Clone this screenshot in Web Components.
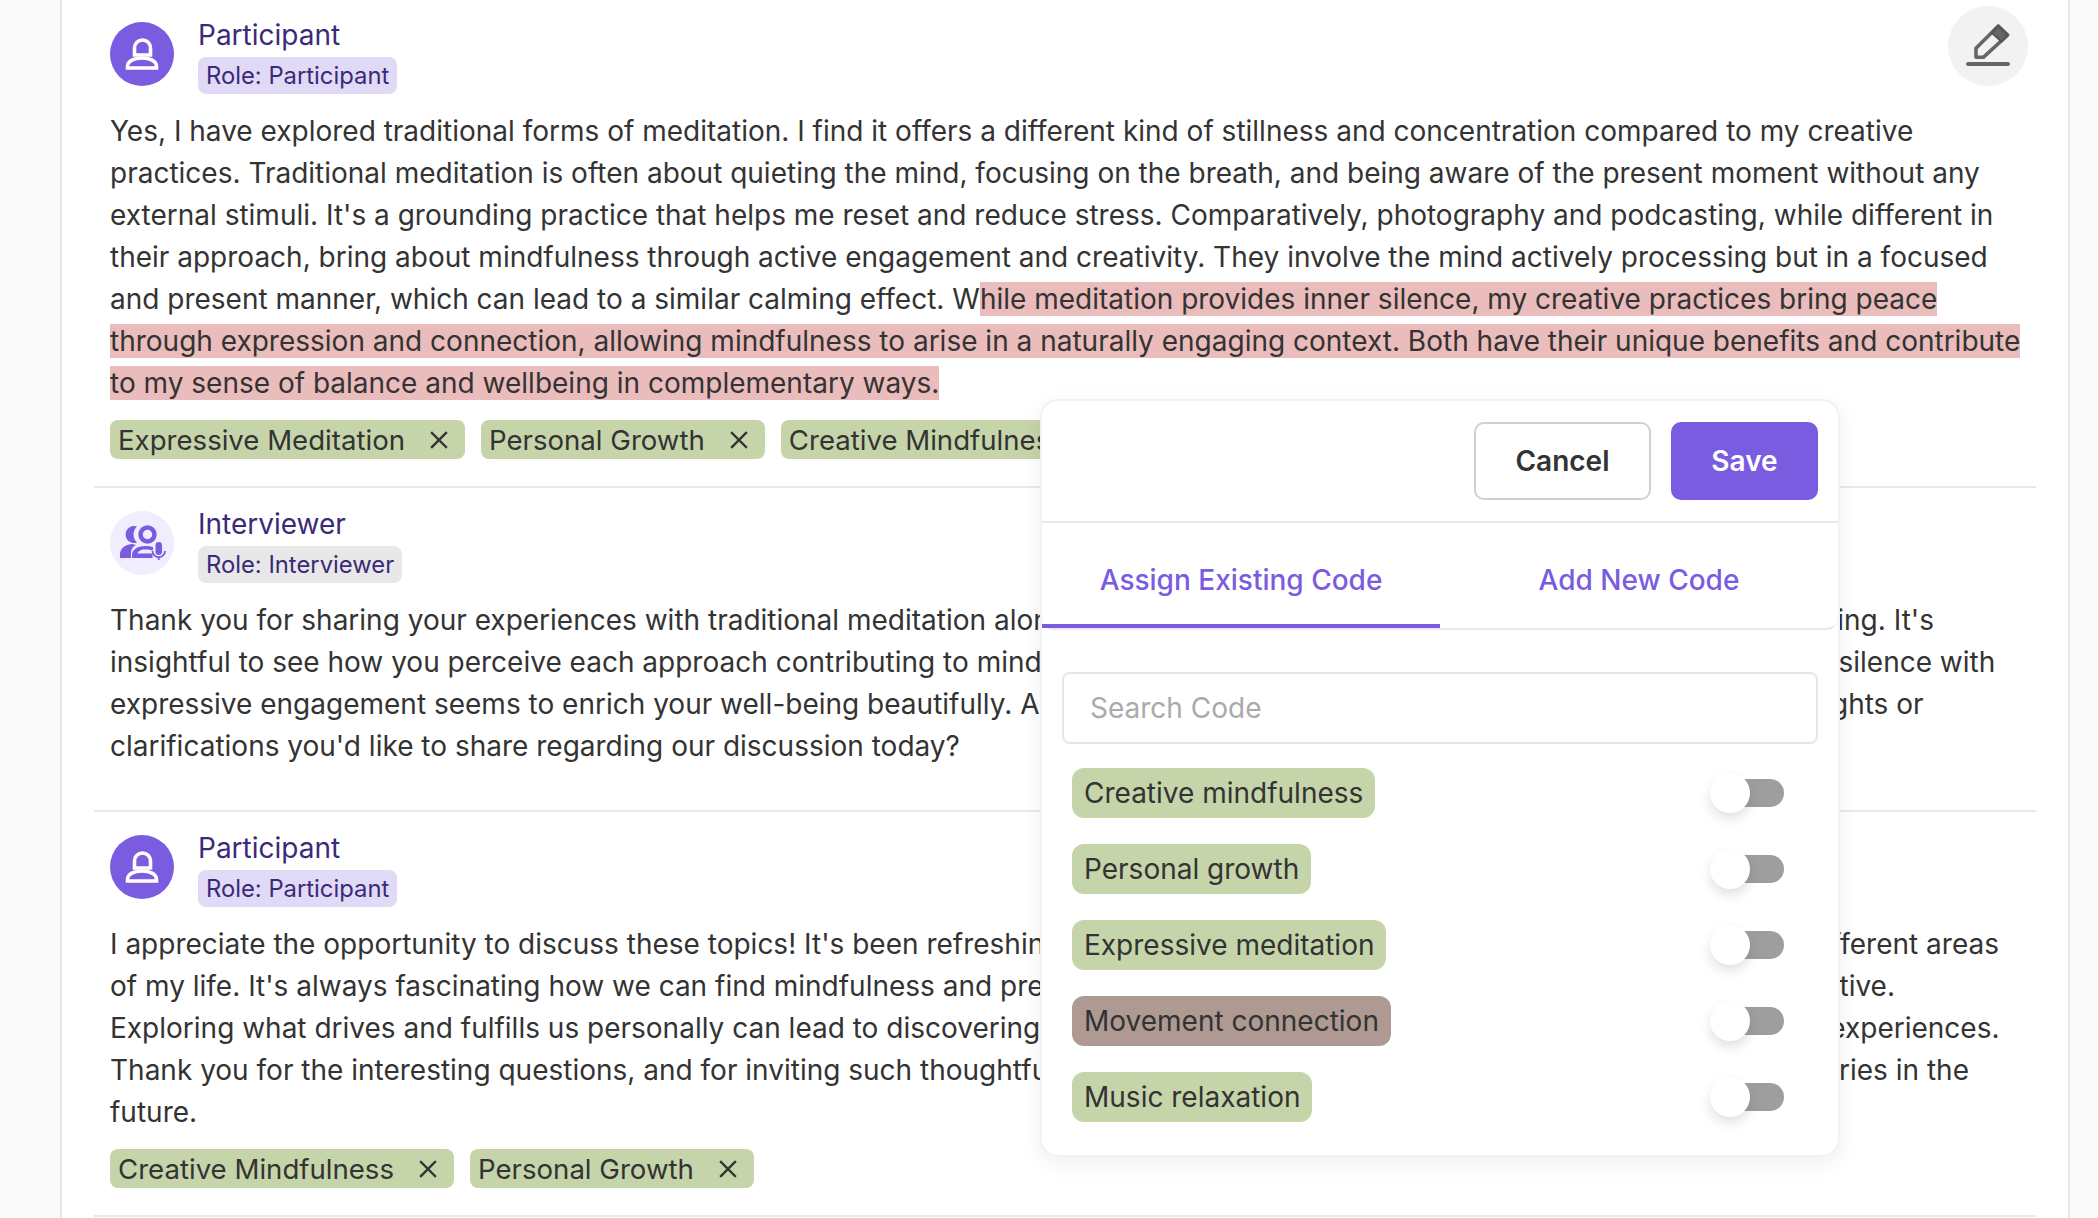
<!DOCTYPE html>
<html>
<head>
<meta charset="utf-8">
<style>
html,body{margin:0;height:100%;overflow:hidden;background:#fafafa;}
body{font-family:Inter,"Liberation Sans",sans-serif;color:#333;}
</style>
</head>
<body>
<transcript-page>
    <transcript-segment name="Participant" role="participant" editable style="--seg-top:17px">
        Yes, I have explored traditional forms of meditation. I find it offers a different kind of stillness and concentration compared to my creative practices. Traditional meditation is often about quieting the mind, focusing on the breath, and being aware of the present moment without any external stimuli. It's a grounding practice that helps me reset and reduce stress. Comparatively, photography and podcasting, while different in their approach, bring about mindfulness through active engagement and creativity. They involve the mind actively processing but in a focused and present manner, which can lead to a similar calming effect. W<text-highlight>hile meditation provides inner silence, my creative practices bring peace through expression and connection, allowing mindfulness to arise in a naturally engaging context. Both have their unique benefits and contribute to my sense of balance and wellbeing in complementary ways.</text-highlight>
        <code-tag slot="tags">Expressive Meditation</code-tag>
        <code-tag slot="tags">Personal Growth</code-tag>
        <code-tag slot="tags">Creative Mindfulness</code-tag>
    </transcript-segment>
    <transcript-segment name="Interviewer" role="interviewer">
        Thank you for sharing your experiences with traditional meditation alongside your creative practices and how these are all connecting. It's<br>
        insightful to see how you perceive each approach contributing to mindfulness in such contrasting ways. Combining that traditional silence with<br>
        expressive engagement seems to enrich your well-being beautifully. As we come to the end of our chat, are there any further thoughts or<br>
        clarifications you'd like to share regarding our discussion today?
    </transcript-segment>
    <transcript-segment name="Participant" role="participant">
        I appreciate the opportunity to discuss these topics! It's been refreshing to reflect on how all my practices connect across many different areas<br>
        of my life. It's always fascinating how we can find mindfulness and presence in the smallest things we do, whether focused or creative.<br>
        Exploring what drives and fulfills us personally can lead to discovering true meaning and deeper connection in all of our everyday experiences.<br>
        Thank you for the interesting questions, and for inviting such thoughtful reflection. I wish you all the best with your work and the series in the<br>
        future.
        <code-tag slot="tags">Creative Mindfulness</code-tag>
        <code-tag slot="tags">Personal Growth</code-tag>
    </transcript-segment>
    <code-popover slot="overlay">
        <code-row>Creative mindfulness</code-row>
        <code-row>Personal growth</code-row>
        <code-row>Expressive meditation</code-row>
        <code-row color="#ae9a92">Movement connection</code-row>
        <code-row>Music relaxation</code-row>
    </code-popover>
</transcript-page>

<script>
class TranscriptPage extends HTMLElement{
    constructor(){
        super();
        this.attachShadow({mode:'open'});
        this.shadowRoot.innerHTML = `
        <style>
            :host{display:block;position:relative;height:1218px;overflow:hidden;box-sizing:border-box;
                margin-left:60px;width:2010px;background:#fff;
                border-left:2px solid #e8e8e8;border-right:2px solid #e8e8e8;padding:0 32px;}
        </style>
        <slot></slot>
        <slot name="overlay"></slot>`;
    }
}

const participantIcon = `
<svg viewBox="0 0 64 64" width="64" height="64">
    <circle cx="32" cy="32" r="32" fill="#7a5ce0"/>
    <path d="M24.5 33V26a8 8 0 0 1 16 0v7z" fill="none" stroke="#fff" stroke-width="3.6"/>
    <path d="M17.5 46v-1.500c0-5.500 7-8.500 14.500-8.500s14.500 3 14.500 8.500V46z" fill="none" stroke="#fff" stroke-width="3.6"/>
</svg>`;

const interviewerIcon = `
<svg viewBox="0 0 64 64" width="64" height="64">
    <circle cx="32" cy="32" r="32" fill="#f0edff"/>
    <circle cx="37.500" cy="23.500" r="7" fill="none" stroke="#7a5ce0" stroke-width="4.500"/>
    <path d="M27 15.500a8.500 8.500 0 1 0 0 16a11 11 0 0 1 0-16z" fill="#7a5ce0"/>
    <path d="M10 47v-4c0-5 4-9 12-10l4 1c-4 2-5 5-5 9v4z" fill="#7a5ce0"/>
    <path d="M22 47v-3c0-5 5-9 13-9c3 0 6 .5 8 1v3.500c-2-.5-5-1-8-1c-4.500 0-7 2-7.500 4h15v4.500z" fill="#7a5ce0"/>
    <rect x="45.500" y="31" width="6.500" height="13" rx="3.250" fill="#7a5ce0"/>
    <path d="M42.500 40a6.250 6.250 0 0 0 12.500 0M48.750 46.500V49" fill="none" stroke="#7a5ce0" stroke-width="1.800"/>
</svg>`;

class TranscriptSegment extends HTMLElement{
    constructor(){
        super();
        this.attachShadow({mode:'open'});
    }
    connectedCallback(){
        const isInterviewer = this.getAttribute('role') === 'interviewer';
        const name = this.getAttribute('name');
        const editBtn = this.hasAttribute('editable') ? `
            <div class="edit">
                <svg viewBox="0 0 80 80" width="80" height="80">
                    <path d="M50.300 20L59.700 29L35.300 51.300H28V42.300z" fill="none" stroke="#666" stroke-width="3.600" stroke-linejoin="round"/>
                    <path d="M50.300 20L59.700 29L53.700 35.700L43.700 26.700z" fill="#666" stroke="#555" stroke-width="2" stroke-linejoin="round"/>
                    <path d="M20 58H60" stroke="#666" stroke-width="4" stroke-linecap="round"/>
                </svg>
            </div>` : '';
        this.shadowRoot.innerHTML = `
        <style>
            :host{display:block;position:relative;padding:var(--seg-top,18px) 16px 27px;border-bottom:2px solid #e8e8e8;}
            .head{display:flex;gap:24px;align-items:flex-start;}
            .avatar{margin-top:5px;width:64px;height:64px;flex:none;}
            .avatar svg{display:block;}
            .who{display:flex;flex-direction:column;align-items:flex-start;gap:4px;}
            .name{font-size:28px;line-height:36px;color:#3b2a78;}
            .role{font-size:23.8px;line-height:37px;height:37px;padding:0 8px;border-radius:8px;color:#3b2a78;
                background:${isInterviewer ? '#e8e8e8' : '#e0daf7'};}
            .text{margin:16px -6px 0 0;font-size:28px;line-height:42px;color:#333;}
            .tags{display:flex;gap:16px;margin-top:16px;}
            .edit{position:absolute;right:8px;top:6px;width:80px;height:80px;border-radius:50%;background:#f2f2f2;}
            .edit svg{display:block;}
        </style>
        <div class="head">
            <div class="avatar">${isInterviewer ? interviewerIcon : participantIcon}</div>
            <div class="who">
                <div class="name">${name}</div>
                <div class="role">Role: ${name}</div>
            </div>
        </div>
        ${editBtn}
        <div class="text"><slot></slot></div>
        <div class="tags"><slot name="tags"></slot></div>`;
        if(!this.querySelector('[slot=tags]')){
            this.shadowRoot.querySelector('.tags').style.height = '0';
        }
    }
}

class TextHighlight extends HTMLElement{
    constructor(){
        super();
        this.attachShadow({mode:'open'});
        // no whitespace around the slot, it would show up in the sentence
        this.shadowRoot.innerHTML = `<style>:host{display:inline;background:#ebbcbc;}</style><slot></slot>`;
    }
}

class CodeTag extends HTMLElement{
    constructor(){
        super();
        this.attachShadow({mode:'open'});
        this.shadowRoot.innerHTML = `
        <style>
            :host{display:inline-flex;align-items:center;height:39px;box-sizing:border-box;padding:0 17px 0 8px;
                gap:25px;border-radius:8px;background:#c6d4aa;font-size:27.6px;color:#333;white-space:nowrap;}
            svg{display:block;flex:none;}
        </style>
        <slot></slot>
        <svg viewBox="0 0 18 18" width="18" height="18"><path d="M2 2L16 16M16 2L2 16" stroke="#333" stroke-width="2.400" stroke-linecap="square"/></svg>`;
    }
}

class CodePopover extends HTMLElement{
    constructor(){
        super();
        this.attachShadow({mode:'open'});
        this.shadowRoot.innerHTML = `
        <style>
            :host{display:block;position:absolute;left:980px;top:401px;width:796px;height:754px;box-sizing:border-box;
                background:#fff;border-radius:16px;box-shadow:0 0 0 2px #f2f2f2,0 6px 24px rgba(0,0,0,.08);
                font-size:28px;color:#333;}
            .actions{display:flex;justify-content:flex-end;gap:20px;padding:21px 20px 21px;border-bottom:2px solid #e8e8e8;}
            button{font:600 28px Inter,"Liberation Sans",sans-serif;height:78px;border-radius:10px;box-sizing:border-box;}
            .cancel{width:177px;background:#fff;border:2px solid #d0d0d0;color:#333;}
            .save{width:147px;background:#7a5ce0;border:none;color:#fff;}
            .tabs{display:flex;height:107px;border-bottom:2px solid #e8e8e8;border-radius:0 0 12px 12px;box-sizing:border-box;}
            .tab{flex:1;display:flex;align-items:center;justify-content:center;color:#7a5ce0;font-weight:500;
                box-sizing:border-box;border-bottom:4px solid transparent;padding-top:12px;}
            .tab.on{border-bottom-color:#7a5ce0;}
            .body{padding:42px 20px 0;}
            input{display:block;width:100%;height:72px;box-sizing:border-box;border:2px solid #e4e6ef;border-radius:8px;
                padding:0 26px;font:28px Inter,"Liberation Sans",sans-serif;outline:none;}
            input::placeholder{color:#aaa;opacity:1;}
            .list{display:flex;flex-direction:column;gap:26px;margin-top:24px;padding:0 34px 0 10px;}
        </style>
        <div class="actions">
            <button class="cancel">Cancel</button>
            <button class="save">Save</button>
        </div>
        <div class="tabs">
            <div class="tab on">Assign Existing Code</div>
            <div class="tab">Add New Code</div>
        </div>
        <div class="body">
            <input placeholder="Search Code">
            <div class="list"><slot></slot></div>
        </div>`;
    }
}

class CodeRow extends HTMLElement{
    constructor(){
        super();
        this.attachShadow({mode:'open'});
    }
    connectedCallback(){
        const color = this.getAttribute('color') || '#c6d4aa';
        this.shadowRoot.innerHTML = `
        <style>
            :host{display:flex;align-items:center;justify-content:space-between;height:50px;}
            .chip{display:flex;align-items:center;height:50px;padding:0 12px;border-radius:12px;background:${color};font-size:28px;color:#333;white-space:nowrap;}
            .toggle{position:relative;width:54px;height:28px;border-radius:0 14px 14px 0;background:#9e9e9e;}
            .knob{position:absolute;left:-20px;top:-6px;width:40px;height:40px;border-radius:50%;background:#fff;
                box-shadow:0 6px 12px rgba(0,0,0,.12);}
        </style>
        <div class="chip"><slot></slot></div>
        <div class="toggle"><div class="knob"></div></div>`;
    }
}

customElements.define('transcript-page', TranscriptPage);
customElements.define('transcript-segment', TranscriptSegment);
customElements.define('text-highlight', TextHighlight);
customElements.define('code-tag', CodeTag);
customElements.define('code-popover', CodePopover);
customElements.define('code-row', CodeRow);
</script>
</body>
</html>
